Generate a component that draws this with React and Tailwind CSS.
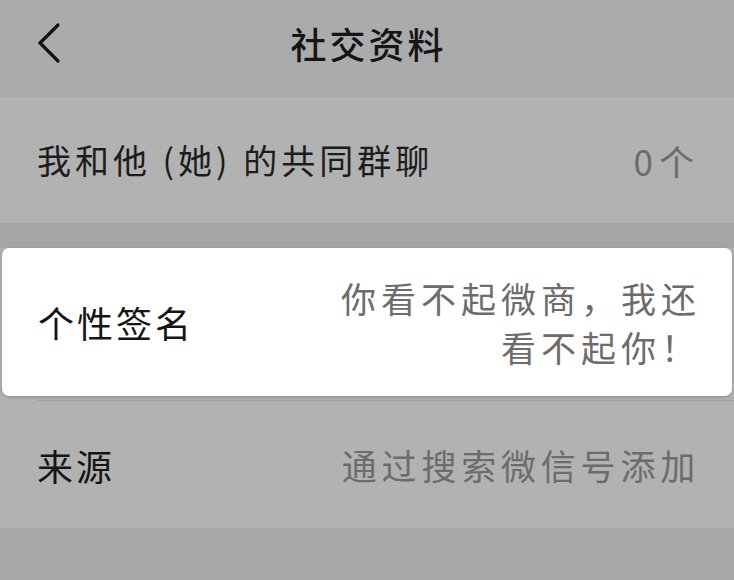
export default function App() {
  const font = { fontFamily: '"Noto Sans CJK SC", "Noto Sans", sans-serif' };
  return (
    <div className="w-[734px] h-[580px] bg-[#a8a8a8] overflow-hidden flex flex-col" style={font}>
      <div className="h-[97px] bg-[#ababab] relative flex justify-center pt-[25px] shrink-0">
        <svg className="absolute left-[36px] top-[22px]" width="28" height="44" viewBox="0 0 28 44" fill="none">
          <path d="M22 3 L4 21 L22 39" stroke="#111" strokeWidth="3.2" strokeLinecap="round" strokeLinejoin="miter" />
        </svg>
        <span className="text-[36px] font-medium text-[#151515] tracking-[3px] leading-none pl-[3px]">社交资料</span>
      </div>
      <div className="h-[126px] bg-[#b2b2b2] flex items-center justify-between pl-[37px] pr-[34px] shrink-0">
        <span className="text-[34px] text-[#1c1c1c] leading-none tracking-[4px]">我和他 (她) 的共同群聊</span>
        <span className="text-[35px] text-[#6c6c6c] leading-none tracking-[6px]">0个</span>
      </div>
      <div className="h-[25px] bg-[#a5a5a5] shrink-0" />
      <div className="bg-[#b2b2b2] flex flex-col shrink-0">
        <div className="mx-[2px] h-[148px] bg-white rounded-[7px] shadow-[0_1px_3px_rgba(0,0,0,0.25)] flex items-center justify-between pl-[36px] pr-[31px]">
          <span className="text-[36px] text-[#151515] leading-none tracking-[3px]">个性签名</span>
          <div className="text-right text-[35px] text-[#6c6c6c] leading-[49px] tracking-[5px]">
            <div>你看不起微商，我还</div>
            <div>看不起你！</div>
          </div>
        </div>
        <div className="h-[4px]" />
        <div className="ml-[37px] h-px bg-[#a2a2a2]" />
        <div className="h-[127px] flex items-center justify-between pl-[37px] pr-[34px]">
          <span className="text-[36px] text-[#151515] leading-none tracking-[3px]">来源</span>
          <span className="text-[35px] text-[#6c6c6c] leading-none tracking-[4.8px]">通过搜索微信号添加</span>
        </div>
      </div>
      <div className="flex-1 bg-[#a8a8a8]" />
    </div>
  );
}
